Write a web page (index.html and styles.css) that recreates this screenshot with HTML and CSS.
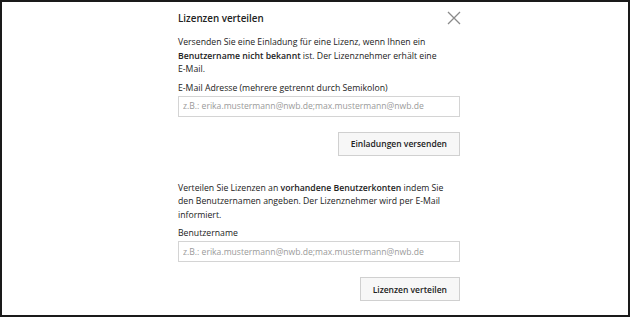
FILE: index.html
```html
<!DOCTYPE html>
<html lang="de">
<head>
    <meta charset="UTF-8">
    <title>Lizenzen verteilen</title>
    <link rel="stylesheet" href="styles.css">
</head>
<body>
    <div class="frame">
        <div class="dialog">
            <div class="dialog-header">
                <h3 class="dialog-title">Lizenzen verteilen</h3>
                <button class="close-button" aria-label="Schließen">
                    <svg width="14" height="14" viewBox="0 0 14 14">
                        <path d="M1 1 L13 13 M13 1 L1 13" stroke="#8a8a8a" stroke-width="1.3" fill="none"/>
                    </svg>
                </button>
            </div>

            <section class="block">
                <p class="info">Versenden Sie eine Einladung für eine Lizenz, wenn Ihnen ein <strong>Benutzername nicht bekannt</strong> ist. Der Lizenznehmer erhält eine <span class="nowrap">E-Mail.</span></p>
                <label class="field-label">E-Mail Adresse (mehrere getrennt durch Semikolon)</label>
                <input class="field-input" type="text" placeholder="z.B.: erika.mustermann@nwb.de;max.mustermann@nwb.de">
                <div class="actions">
                    <button class="action-button">Einladungen versenden</button>
                </div>
            </section>

            <section class="block block-second">
                <p class="info">Verteilen Sie Lizenzen an <strong>vorhandene Benutzerkonten</strong> indem Sie den Benutzernamen angeben. Der Lizenznehmer wird per <span class="nowrap">E-Mail</span> informiert.</p>
                <label class="field-label">Benutzername</label>
                <input class="field-input" type="text" placeholder="z.B.: erika.mustermann@nwb.de;max.mustermann@nwb.de">
                <div class="actions">
                    <button class="action-button">Lizenzen verteilen</button>
                </div>
            </section>
        </div>
    </div>
</body>
</html>
```

FILE: styles.css
```css
/* Grundlayout */
html, body {
    margin: 0;
    padding: 0;
    height: 100%;
}

body {
    font-family: 'Open Sans', 'Liberation Sans', sans-serif;
    color: #222;
    background-color: #fff;
}

/* dunkler Rahmen um die Seite */
.frame {
    box-sizing: border-box;
    height: 317px;
    border: 2px solid #1a1a1a;
    display: flex;
    justify-content: center;
    overflow: hidden;
}

.dialog {
    width: 282px;
    padding-top: 9px;
    margin-left: 8px;
}

.dialog-header {
    display: flex;
    justify-content: space-between;
    align-items: flex-start;
    margin-right: -1px;
}

.dialog-title {
    font-size: 9.8px;
    font-weight: 600;
    margin: 1px 0 0 0;
    line-height: 14px;
}

.close-button {
    background: none;
    border: none;
    padding: 0;
    cursor: pointer;
    line-height: 0;
}

.block {
    margin-top: 10px;
}

.block-second {
    margin-top: 26px;
}

.info {
    font-size: 8.7px;
    line-height: 13.5px;
    margin: 0 0 4px 0;
}

.info strong {
    font-weight: 600;
}

.nowrap {
    white-space: nowrap;
}

.field-label {
    display: block;
    font-size: 8.7px;
    line-height: 14px;
    margin-bottom: 1px;
}

.field-input {
    box-sizing: border-box;
    display: block;
    width: 282px;
    height: 21px;
    border: 1px solid #d4d4d4;
    padding: 0 4px;
    font-family: inherit;
    font-size: 8.6px;
    color: #333;
}

.field-input::placeholder {
    color: #9a9a9a;
}

.actions {
    display: flex;
    justify-content: flex-end;
    margin-top: 15px;
}

.action-button {
    font-family: inherit;
    font-size: 8.5px;
    font-weight: 600;
    color: #222;
    background-color: #f7f7f7;
    border: 1px solid #d0d0d0;
    height: 24px;
    padding: 0 12px;
    cursor: pointer;
}
```
